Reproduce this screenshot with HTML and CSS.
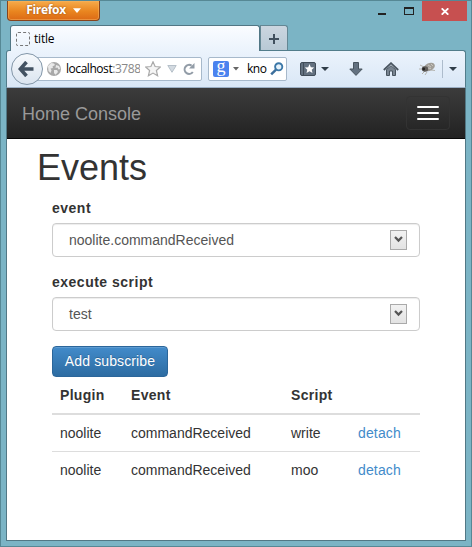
FILE: index.html
```html
<!DOCTYPE html>
<html lang="en">
<head>
<meta charset="utf-8">
<title>title</title>
<link rel="stylesheet" href="styles.css">
</head>
<body>
<div class="window">
  <header class="titlebar">
    <button class="app-button">Firefox <svg width="8" height="5" viewBox="0 0 8 5"><path d="M0 0.3H8L4 5Z" fill="#fff"/></svg></button>
    <div class="controls">
      <svg class="min" width="8" height="2"><rect width="8" height="2" fill="#222"/></svg>
      <svg class="max" width="10" height="8"><path d="M0 0H10V8H0ZM1 2V7H9V2Z" fill="#222" fill-rule="evenodd"/></svg>
      <div class="close"><svg width="8" height="7" viewBox="0 0 8 7"><path d="M0.7 0.3L7.3 6.7M7.3 0.3L0.7 6.7" stroke="#fff" stroke-width="1.8"/></svg></div>
    </div>
  </header>
  <nav class="tabs">
    <div class="tab"><span class="favicon"></span>title</div>
    <div class="new-tab"><svg width="10" height="10"><path d="M5 0V10M0 5H10" stroke="#40505e" stroke-width="2"/></svg></div>
  </nav>
  <div class="toolbar">
    <div class="back"><svg width="16" height="16" viewBox="0 0 16 16"><path d="M8.5 1L2.3 8L8.5 15M3 8H15.5" fill="none" stroke="#435262" stroke-width="3.6"/></svg></div>
    <div class="url">
      <svg class="globe" width="14" height="14" viewBox="0 0 14 14"><circle cx="7" cy="7" r="7" fill="#a8a8a8"/><path d="M1 4L4 1L7 1.5L8 3L5.5 4.5L6 6L3.5 6.5L4.5 8.5L3.5 11L1.5 9Z M9 3L12 4L13.3 7L11.5 7.5L10.5 5.5L8.5 6Z M7 8L10 8L11 10L8.5 12.8L7 11Z" fill="#e9e9e9"/></svg>
      <span class="address">localhost<i>:3788</i></span>
      <svg class="star" width="16" height="16" viewBox="0 0 16 16"><path d="M8 .8L10.1 5.5L15.3 6L11.4 9.5L12.6 14.8L8 12.1L3.4 14.8L4.6 9.5L.7 6L5.9 5.5Z" fill="#f5f5f5" stroke="#aaa" stroke-width="1.2"/></svg>
      <svg class="history" width="10" height="8"><path d="M.8 .5H9.2L5 7.3Z" fill="#d3dae1" stroke="#b6c0c9"/></svg>
      <svg class="reload" width="12" height="12" viewBox="0 0 12 12"><path d="M9.8 9A4.5 4.5 0 1 1 8.6 2.6" fill="none" stroke="#929ca7" stroke-width="2"/><path d="M11.5 0V5.5H6Z" fill="#929ca7"/></svg>
    </div>
    <div class="search">
      <span class="engine">g</span>
      <svg class="engine-arrow" width="6" height="4"><path d="M0 0H6L3 3.5Z" fill="#666"/></svg>
      <span class="query">kno</span>
      <svg width="14" height="14" viewBox="0 0 14 14"><circle cx="8.7" cy="4.8" r="3.6" fill="#e6f3fc" stroke="#3c78a8" stroke-width="1.9"/><path d="M6 7.7L1.2 12.4" stroke="#3c6f9c" stroke-width="2.5"/></svg>
    </div>
    <div class="actions">
      <svg class="bookmarks" width="16" height="14" viewBox="0 0 16 14"><rect x=".5" y=".5" width="15" height="13" rx="1.5" fill="#637180" stroke="#414d59"/><path d="M3.5 1V13" stroke="#414d59"/><path d="M9.5 2L10.8 5.2L14.2 5.5L11.7 7.7L12.5 11.1L9.5 9.3L6.5 11.1L7.3 7.7L4.8 5.5L8.2 5.2Z" fill="#fff"/></svg>
      <svg class="caret caret-one" width="8" height="4"><path d="M0 0H8L4 4Z" fill="#303d49"/></svg>
      <svg class="download" width="14" height="14" viewBox="0 0 14 14"><path d="M4.5 .5H9.5V7H13.2L7 13.4L.8 7H4.5Z" fill="#637180" stroke="#48545f"/></svg>
      <svg class="home" width="16" height="14" viewBox="0 0 16 14"><path d="M3.5 7.5L8 3.7L12.5 7.5V13.5H9.5V9H6.5V13.5H3.5Z" fill="#788490" stroke="#48545f"/><path d="M.8 8L8 1.2L15.2 8" fill="none" stroke="#48545f" stroke-width="1.8"/></svg>
      <svg class="bug" width="17" height="14" viewBox="0 0 17 14"><path d="M1 3L5 5M0 7H5M3 12L6 9M8 10L6 13M12 8L16 8.5" stroke="#b5b5b0"/><ellipse cx="10.3" cy="5" rx="5.8" ry="3.9" transform="rotate(-25 10.3 5)" fill="#a19e98"/><ellipse cx="6" cy="7" rx="3.2" ry="2.8" fill="#5e5b58"/><path d="M9 3L12 5M12 2L14 4M9 6L12 6.5" stroke="#c8c6c0"/><circle cx="4.7" cy="7" r="1.4" fill="#222"/></svg>
      <span class="divider"></span>
      <svg class="caret" width="8" height="4"><path d="M0 0H8L4 4Z" fill="#303d49"/></svg>
    </div>
  </div>
  <main class="page">
    <div class="navbar">
      <a class="brand">Home Console</a>
      <button class="toggle"><span></span><span></span><span></span></button>
    </div>
    <div class="container">
      <h1>Events</h1>
      <div class="content">
        <div class="group"><label>event</label>
          <div class="select">noolite.commandReceived<span class="drop"><svg width="9" height="7" viewBox="0 0 9 7"><path d="M1 1L4.5 4.6L8 1" fill="none" stroke="#555" stroke-width="2.2"/></svg></span></div>
        </div>
        <div class="group"><label>execute script</label>
          <div class="select">test<span class="drop"><svg width="9" height="7" viewBox="0 0 9 7"><path d="M1 1L4.5 4.6L8 1" fill="none" stroke="#555" stroke-width="2.2"/></svg></span></div>
        </div>
        <button class="add">Add subscribe</button>
        <table>
          <colgroup><col class="c1"><col class="c2"><col class="c3"><col></colgroup>
          <thead><tr><th>Plugin</th><th>Event</th><th>Script</th><th></th></tr></thead>
          <tbody>
            <tr><td>noolite</td><td>commandReceived</td><td>write</td><td><a>detach</a></td></tr>
            <tr><td>noolite</td><td>commandReceived</td><td>moo</td><td><a>detach</a></td></tr>
          </tbody>
        </table>
      </div>
    </div>
  </main>
</div>
</body>
</html>
```
FILE: styles.css
```css
* { box-sizing: border-box; }
body { margin: 0; font: 14px/20px "Liberation Sans", sans-serif; color: #333; }
button { font: inherit; margin: 0; }
svg { display: block; flex: none; }
.window {
  width: 472px; height: 547px; display: flex; flex-direction: column;
  padding: 0 5px 5px; border: 1px solid #568895; background: #7bb4c5; overflow: hidden;
}
.titlebar { height: 24px; flex: none; display: flex; justify-content: space-between; padding-left: 1px; }
.app-button {
  width: 93px; height: 20px; display: flex; align-items: center; justify-content: center; gap: 7px; padding: 0 0 1px;
  border: 1px solid #87431c; border-top: 0; border-radius: 0 0 4px 4px;
  background: linear-gradient(#f6ab4b, #e9851f 55%, #dc6a16);
  box-shadow: inset 0 0 0 1px #f5b35e88;
  color: #fff; font: bold 12px/16px "Open Sans", sans-serif; letter-spacing: -.3px; text-shadow: 0 0 2px #8a4510;
}
.controls { display: flex; align-items: flex-start; margin-right: -1px; }
.min { margin: 12px 18px 0 0; }
.max { margin: 6px 8px 0 0; }
.close { width: 45px; height: 20px; background: #c75050; display: flex; align-items: center; justify-content: center; padding-top: 1px; }
.tabs { display: flex; height: 25px; flex: none; padding-left: 4px; }
.tab {
  width: 250px; height: 26px; position: relative; display: flex; align-items: center; gap: 4px; padding: 1px 0 0 5px;
  border: 1px solid #527785; border-bottom: 0; border-radius: 3px 3px 0 0;
  background: linear-gradient(#fafcff, #ebf3fc); color: #000; font: 12px/16px "Open Sans", sans-serif; letter-spacing: -.2px;
}
.favicon { width: 14px; height: 14px; border: 1px dashed #777; border-radius: 2px; }
.new-tab {
  width: 28px; height: 25px; border: 1px solid #648794; border-bottom: 0; border-radius: 0 3px 0 0;
  background: linear-gradient(#cbd6e0, #b8c9d5); display: flex; align-items: center; justify-content: center; padding-top: 2px;
}
.toolbar {
  height: 38px; flex: none; display: flex; align-items: center; padding-left: 4px;
  border: 1px solid #527d8b; border-bottom-color: #9bafc5; border-radius: 3px 3px 0 0;
  background: linear-gradient(#ebf3fc, #d9e7f6);
}
.back {
  width: 32px; height: 32px; flex: none; position: relative; z-index: 1; border: 1px solid #8296a8; border-radius: 50%;
  background: linear-gradient(#f6f9fc, #dbe5f0); display: flex; align-items: center; justify-content: center; padding-right: 2px;
}
.url {
  width: 168px; height: 24px; margin-left: -9px; display: flex; align-items: center; padding-left: 12px;
  border: 1px solid #a7b9cb; border-radius: 2px; background: #fff;
}
.address { width: 74px; margin-left: 5px; overflow: hidden; white-space: nowrap; color: #000; font: 12px/18px "Open Sans", sans-serif; letter-spacing: -.45px; }
.address i { color: #888; font-style: normal; }
.star { margin-left: 5px; }
.history { margin-left: 6px; }
.reload { margin-left: 6px; }
.search {
  width: 79px; height: 24px; margin-left: 6px; display: flex; align-items: center; padding-left: 4px;
  border: 1px solid #a7b9cb; border-radius: 2px; background: #fff;
}
.engine { width: 16px; height: 16px; flex: none; border-radius: 2px; background: #4b83ef; color: #fff; font: 18px/11px "Liberation Serif", serif; text-align: center; }
.engine-arrow { margin-left: 4px; }
.query { width: 20px; margin: 0 3px 0 8px; color: #000; font: 12px/18px "Open Sans", sans-serif; letter-spacing: -.5px; }
.actions { display: flex; align-items: center; margin-left: 13px; }
.caret-one { margin-left: 5px; }
.download { margin-left: 20px; }
.home { margin-left: 20px; }
.bug { margin-left: 20px; }
.divider { width: 1px; height: 18px; margin: 0 6px 0 6px; background: #adbccc; }
.page { flex: 1; margin: 0; border: solid #527885; border-width: 0 1px 1px; background: #fff; }
.navbar {
  height: 51px; display: flex; align-items: center; justify-content: space-between; padding: 0 15px;
  border-bottom: 1px solid #080808; background: linear-gradient(#3c3c3c, #222);
}
.navbar .brand { font-size: 18px; color: #999; padding-top: 1px; }
.toggle { width: 44px; height: 34px; padding: 0 10px; border: 1px solid #333; border-radius: 4px; background: none; display: flex; flex-direction: column; justify-content: center; gap: 4px; }
.toggle span { height: 2px; background: #fff; border-radius: 1px; }
.container { padding: 9px 45px 0 30px; }
h1 { margin: 0; font: 36px/40px "Liberation Sans", sans-serif; }
.content { padding: 10px 0 0 15px; }
.group { margin-bottom: 15px; }
label { display: block; font-weight: bold; letter-spacing: .5px; margin-bottom: 5px; }
.select {
  height: 34px; display: flex; align-items: center; justify-content: space-between; padding: 0 12px 1px 16px;
  border: 1px solid #ccc; border-radius: 4px; box-shadow: inset 0 1px 1px rgba(0,0,0,.075); color: #555;
}
.drop { width: 17px; height: 20px; border: 1px solid #aaa; background: linear-gradient(#f2f2f2, #e3e3e3); display: flex; align-items: center; justify-content: center; }
.add {
  display: block; width: 116px; height: 31px; padding: 0 0 1px; border: 1px solid #2b669a; border-radius: 4px;
  background: linear-gradient(#428bca, #2d6ca2); color: #fff; letter-spacing: .12px; text-shadow: 0 -1px 0 rgba(0,0,0,.2);
  box-shadow: inset 0 1px 0 rgba(255,255,255,.15);
}
table { width: 368px; table-layout: fixed; border-collapse: collapse; }
.c1 { width: 71px; }
.c2 { width: 160px; }
.c3 { width: 67px; }
th, td { height: 37px; padding: 8px; text-align: left; border-top: 1px solid #ddd; vertical-align: top; }
th { border-top: 0; border-bottom: 2px solid #ddd; letter-spacing: .3px; }
td a { color: #428bca; letter-spacing: .15px; }
```
